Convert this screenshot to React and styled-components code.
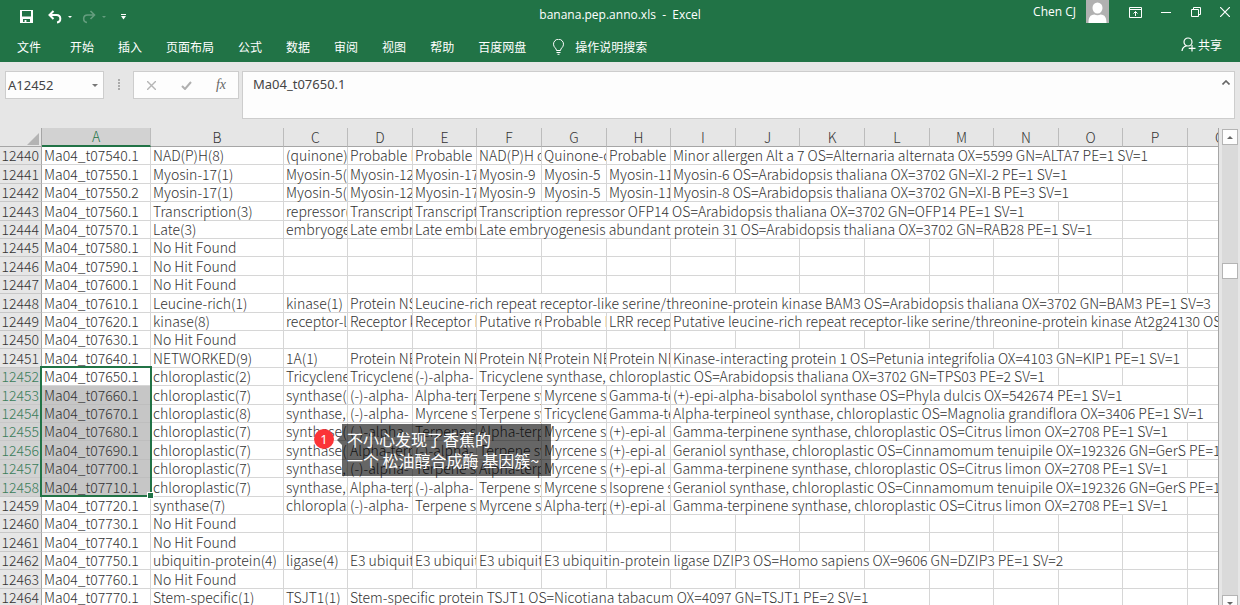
import React, { useState } from 'react';
import styled, { createGlobalStyle, css } from 'styled-components';

const GREEN = '#217346';
const LINE = '#d6d6d6';
const EDGE = '#a6a6a6';

const GlobalStyle = createGlobalStyle`
  * { box-sizing: border-box; }
  body {
    margin: 0;
    overflow: hidden;
    font-family: "Noto Sans CJK SC", sans-serif;
    color: #333;
  }
  button, input, textarea {
    font: inherit;
    color: inherit;
    border: 0;
    padding: 0;
    margin: 0;
    background: none;
  }
`;

const Window = styled.div`
  display: flex;
  flex-direction: column;
  height: 100vh;
  background: #e6e6e6;
`;

const Ribbon = styled.header`
  background: ${GREEN};
  color: #fff;
  height: 62px;
`;

const TitleBar = styled.div`
  display: grid;
  grid-template-columns: 1fr auto 1fr;
  height: 31px;
`;

const QuickAccess = styled.div`
  display: flex;
  align-items: center;
  padding: 2px 0 0 20px;
`;

const IconButton = styled.button`
  display: flex;
  align-items: center;
  justify-content: center;
  width: ${props => props.$w || 16}px;
  height: 20px;
  margin-left: ${props => props.$gap || 0}px;
  opacity: ${props => (props.$dim ? 0.3 : 1)};
`;

const FileTitle = styled.div`
  font: 12px/30px "Open Sans", sans-serif;
  white-space: pre;
`;

const Account = styled.div`
  display: flex;
  justify-content: flex-end;
  align-items: flex-start;
  padding-right: 10px;
`;

const UserName = styled.span`
  font: 12px/24px "Open Sans", sans-serif;
  margin-right: 10px;
`;

const WindowButton = styled(IconButton)`
  height: 24px;
`;

const Tabs = styled.nav`
  display: flex;
  align-items: center;
  gap: 24px;
  height: 31px;
  padding: 0 18px 0 17px;
  font-size: 12px;
  line-height: 16px;
`;

const Tab = styled.button`
  margin-right: ${props => (props.$file ? 5 : 0)}px;
  white-space: nowrap;
`;

const Tell = styled.button`
  display: flex;
  align-items: center;
  gap: 10px;
  margin-left: 2px;
  white-space: nowrap;
`;

const Share = styled.button`
  display: flex;
  align-items: center;
  gap: 2px;
  margin-left: auto;
  padding-bottom: 4px;
`;

const FormulaRow = styled.div`
  display: flex;
  align-items: flex-start;
  height: 66px;
  padding: 9px 5px 0;
  font-family: "Noto Sans", sans-serif;
  color: #444;
`;

const Box = styled.div`
  display: flex;
  align-items: center;
  background: #fdfdfd;
  border: 1px solid #cdcdcd;
`;

const NameBox = styled(Box)`
  width: 99px;
  height: 28px;
`;

const NameInput = styled.input`
  flex: 1;
  min-width: 0;
  padding-left: 2px;
  font-size: 13px;
  outline: none;
`;

const Grip = styled.div`
  display: flex;
  justify-content: center;
  width: 29px;
  padding-top: 8px;
`;

const FxBox = styled(Box)`
  width: 106px;
  height: 28px;
  justify-content: space-between;
  padding: 0 8px;
`;

const FxButton = styled.button`
  width: 18px;
  font: italic 14px/18px "Liberation Serif", serif;
  color: #666;
`;

const FormulaBox = styled(Box)`
  flex: 1;
  align-items: flex-start;
  height: 48px;
  margin-left: 3px;
`;

const FormulaInput = styled.textarea`
  flex: 1;
  height: 44px;
  padding: 2px 10px;
  font-size: 13px;
  line-height: 20px;
  resize: none;
  outline: none;
`;

const SheetArea = styled.main`
  display: flex;
  flex: 1;
  min-height: 0;
`;

const Sheet = styled.div`
  position: relative;
  flex: 1;
  min-width: 0;
  overflow: hidden;
  border-right: 1px solid ${EDGE};
`;

const Grid = styled.table`
  table-layout: fixed;
  width: 1252px;
  border-collapse: separate;
  border-spacing: 0;
  background: #fff;
  font-size: 14px;
  line-height: 17px;
  white-space: nowrap;

  tbody tr { height: 18px; }
  tbody tr:nth-child(5n + 2), tbody tr:nth-child(5n + 4) { height: 19px; }
`;

const ColHead = styled.th`
  height: 19px;
  padding: 0;
  font-weight: 300;
  color: ${props => (props.$on ? GREEN : '#333')};
  background: ${props => (props.$on ? '#d2d2d2' : '#e6e6e6')};
  border-right: 1px solid #bcbcbc;
  border-bottom: ${props => (props.$on ? `2px solid ${GREEN}` : `1px solid ${EDGE}`)};
`;

const Corner = styled(ColHead)`
  border-right-color: ${EDGE};
  svg { display: block; margin: 3px 2px 0 auto; }
`;

const RowHead = styled.th`
  padding: 0 2px 0 0;
  font-weight: 300;
  text-align: right;
  color: ${props => (props.$on ? '#3a7d5a' : '#333')};
  background: ${props => (props.$on ? '#d2d2d2' : '#e6e6e6')};
  border-right: 1px solid ${EDGE};
  border-bottom: 1px solid #c8c8c8;
`;

// clipped sideways only, so descenders stay whole in the tight rows
const Cell = styled.td`
  padding: 0 0 0 2px;
  font-weight: 300;
  overflow-x: clip;
  overflow-y: visible;
  border-right: 1px solid ${LINE};
  border-bottom: 1px solid ${LINE};
  ${props => props.$shaded && css`
    background: #c6c6c6;
    border-color: #bebebe;
  `}
  ${props => props.$anchor && css`
    position: relative;
    overflow: visible;
  `}
`;

const Selection = styled.div`
  position: absolute;
  top: -2px;
  left: -2px;
  width: calc(100% + 4px);
  height: 131px;
  border: 2px solid ${GREEN};
  pointer-events: none;

  &::after {
    content: '';
    position: absolute;
    right: -3px;
    bottom: -3px;
    width: 5px;
    height: 5px;
    background: ${GREEN};
    outline: 1px solid #fff;
  }
`;

const Note = styled.aside`
  position: absolute;
  top: 296px;
  left: 314px;
  display: flex;
  align-items: flex-start;
`;

const NoteBadge = styled.span`
  width: 20px;
  height: 20px;
  margin-top: 5px;
  border-radius: 50%;
  background: #fb3437;
  color: #fff;
  font: 13px/20px "Noto Sans", sans-serif;
  text-align: center;
`;

const NoteArrow = styled.span`
  margin: 11px 0 0 3px;
  border: 5px solid transparent;
  border-left-width: 0;
  border-right-color: rgba(0, 0, 0, 0.6);
`;

const NoteText = styled.p`
  margin: 0;
  padding: 5px 12px 5px 5px;
  background: rgba(0, 0, 0, 0.6);
  color: #fff;
  font-size: 16px;
  line-height: 21px;
  white-space: nowrap;
`;

const ScrollBar = styled.div`
  display: flex;
  flex-direction: column;
  width: 16px;
  margin: 1px 2px 0 3px;
  background: #dadada;
`;

const ScrollButton = styled.button`
  display: flex;
  justify-content: center;
  align-items: ${props => (props.$down ? 'flex-end' : 'center')};
  height: ${props => (props.$down ? 10 : 16)}px;
  background: #fdfdfd;
  border: 1px solid #b4b4b4;
  border-bottom-width: ${props => (props.$down ? 0 : 1)}px;
`;

const ScrollTrack = styled.div`
  flex: 1;
  padding-top: 118px;
`;

const ScrollThumb = styled.div`
  height: 16px;
  background: #fff;
  border: 1px solid #b4b4b4;
`;

const tabs = ['文件', '开始', '插入', '页面布局', '公式', '数据', '审阅', '视图', '帮助', '百度网盘'];

const columns = [
  ['A', 109], ['B', 133], ['C', 64], ['D', 65], ['E', 64], ['F', 65], ['G', 65], ['H', 64], ['I', 65],
  ['J', 64], ['K', 65], ['L', 65], ['M', 64], ['N', 65], ['O', 64], ['P', 65], ['Q', 65],
];

const synth = 'synthase, chloroplastic';
const aPinene = '(-)-alpha-';
const aTerp = 'Alpha-terp';
const terpene = 'Terpene sy';
const myrcene = 'Myrcene s';
const epi = '(+)-epi-al';
const gammaLimon = `Gamma-terpinene ${synth} OS=Citrus limon OX=2708 PE=1 SV=1`;
const geraniol = `Geraniol ${synth} OS=Cinnamomum tenuipile OX=192326 GN=GerS PE=1`;
const noHit = ['No Hit Found'];

// values of columns B, C, D...; the last value spills over `span` columns
const rows = [
  { a: 'Ma04_t07540.1', v: ['NAD(P)H(8)', '(quinone)(', 'Probable N', 'Probable N', 'NAD(P)H d', 'Quinone-o', 'Probable N', 'Minor allergen Alt a 7 OS=Alternaria alternata OX=5599 GN=ALTA7 PE=1 SV=1'], span: 8 },
  { a: 'Ma04_t07550.1', v: ['Myosin-17(1)', 'Myosin-5(', 'Myosin-12', 'Myosin-17', 'Myosin-9', 'Myosin-5', 'Myosin-11', 'Myosin-6 OS=Arabidopsis thaliana OX=3702 GN=XI-2 PE=1 SV=1'], span: 7 },
  { a: 'Ma04_t07550.2', v: ['Myosin-17(1)', 'Myosin-5(', 'Myosin-12', 'Myosin-17', 'Myosin-9', 'Myosin-5', 'Myosin-11', 'Myosin-8 OS=Arabidopsis thaliana OX=3702 GN=XI-B PE=3 SV=1'], span: 7 },
  { a: 'Ma04_t07560.1', v: ['Transcription(3)', 'repressor(', 'Transcripti', 'Transcripti', 'Transcription repressor OFP14 OS=Arabidopsis thaliana OX=3702 GN=OFP14 PE=1 SV=1'], span: 9 },
  { a: 'Ma04_t07570.1', v: ['Late(3)', 'embryoge', 'Late embr', 'Late embr', 'Late embryogenesis abundant protein 31 OS=Arabidopsis thaliana OX=3702 GN=RAB28 PE=1 SV=1'], span: 10 },
  { a: 'Ma04_t07580.1', v: noHit },
  { a: 'Ma04_t07590.1', v: noHit },
  { a: 'Ma04_t07600.1', v: noHit },
  { a: 'Ma04_t07610.1', v: ['Leucine-rich(1)', 'kinase(1)', 'Protein NS', 'Leucine-rich repeat receptor-like serine/threonine-protein kinase BAM3 OS=Arabidopsis thaliana OX=3702 GN=BAM3 PE=1 SV=3'], span: 13 },
  { a: 'Ma04_t07620.1', v: ['kinase(8)', 'receptor-l', 'Receptor k', 'Receptor k', 'Putative re', 'Probable L', 'LRR recep', 'Putative leucine-rich repeat receptor-like serine/threonine-protein kinase At2g24130 OS='], span: 9 },
  { a: 'Ma04_t07630.1', v: noHit },
  { a: 'Ma04_t07640.1', v: ['NETWORKED(9)', '1A(1)', 'Protein NE', 'Protein NE', 'Protein NE', 'Protein NE', 'Protein NE', 'Kinase-interacting protein 1 OS=Petunia integrifolia OX=4103 GN=KIP1 PE=1 SV=1'], span: 8 },
  { a: 'Ma04_t07650.1', v: ['chloroplastic(2)', 'Tricyclene', 'Tricyclene', aPinene, `Tricyclene ${synth} OS=Arabidopsis thaliana OX=3702 GN=TPS03 PE=2 SV=1`], span: 9 },
  { a: 'Ma04_t07660.1', v: ['chloroplastic(7)', 'synthase(6', aPinene, aTerp, terpene, myrcene, 'Gamma-te', '(+)-epi-alpha-bisabolol synthase OS=Phyla dulcis OX=542674 PE=1 SV=1'], span: 8 },
  { a: 'Ma04_t07670.1', v: ['chloroplastic(8)', 'synthase,(', aPinene, myrcene, terpene, 'Tricyclene', 'Gamma-te', `Alpha-terpineol ${synth} OS=Magnolia grandiflora OX=3406 PE=1 SV=1`], span: 9 },
  { a: 'Ma04_t07680.1', v: ['chloroplastic(7)', 'synthase(6', aPinene, terpene, aTerp, myrcene, epi, gammaLimon], span: 8 },
  { a: 'Ma04_t07690.1', v: ['chloroplastic(7)', 'synthase(6', aTerp, aPinene, terpene, myrcene, epi, geraniol], span: 9 },
  { a: 'Ma04_t07700.1', v: ['chloroplastic(7)', 'synthase,(', aPinene, terpene, aTerp, myrcene, epi, gammaLimon], span: 8 },
  { a: 'Ma04_t07710.1', v: ['chloroplastic(7)', 'synthase,(', aTerp, aPinene, terpene, myrcene, 'Isoprene s', geraniol], span: 9 },
  { a: 'Ma04_t07720.1', v: ['synthase(7)', 'chloroplas', aPinene, terpene, myrcene, aTerp, epi, gammaLimon], span: 8 },
  { a: 'Ma04_t07730.1', v: noHit },
  { a: 'Ma04_t07740.1', v: noHit },
  { a: 'Ma04_t07750.1', v: ['ubiquitin-protein(4)', 'ligase(4)', 'E3 ubiquit', 'E3 ubiquit', 'E3 ubiquit', 'E3 ubiquitin-protein ligase DZIP3 OS=Homo sapiens OX=9606 GN=DZIP3 PE=1 SV=2'], span: 9 },
  { a: 'Ma04_t07760.1', v: noHit },
  { a: 'Ma04_t07770.1', v: ['Stem-specific(1)', 'TSJT1(1)', 'Stem-specific protein TSJT1 OS=Nicotiana tabacum OX=4097 GN=TSJT1 PE=2 SV=1'], span: 9 },
];

const FIRST_ROW = 12440;
const SEL_FROM = 12452;
const SEL_TO = 12458;

function Caret({ size = 6, color = 'currentColor', up }) {
  return (
    <svg width={size} height={size / 2} viewBox="0 0 6 3" fill={color}>
      <path d={up ? 'M0 3h6L3 0z' : 'M0 0h6L3 3z'} />
    </svg>
  );
}

function TopBar() {
  return (
    <TitleBar>
      <QuickAccess>
        <IconButton $w={13} aria-label="保存">
          <svg width="13" height="13" viewBox="0 0 13 13">
            <path fill="#fff" fillRule="evenodd" d="M0 0h13v13H0zM2 1v5.500h9V1zM3 9v3h1.600v-2h1.800v2H10V9z" />
          </svg>
        </IconButton>
        <IconButton $w={14} $gap={15} aria-label="撤消">
          <svg width="14" height="14" viewBox="0 0 14 14" fill="none" stroke="#fff" strokeWidth="2">
            <path d="M5.500 1L1.500 5l4 4M2 5h6.500c5 0 5 7 .5 7.500" />
          </svg>
        </IconButton>
        <IconButton $w={4} $gap={6} aria-label="撤消列表"><Caret size={4} /></IconButton>
        <IconButton $w={14} $gap={10} $dim aria-label="恢复">
          <svg width="14" height="14" viewBox="0 0 14 14" fill="none" stroke="#fff" strokeWidth="1.600">
            <path d="M8.500 1l4 4-4 4M12 5H5.500c-5 0-5 7-.5 7.500" />
          </svg>
        </IconButton>
        <IconButton $w={4} $gap={6} $dim aria-label="恢复列表"><Caret size={4} /></IconButton>
        <IconButton $w={5} $gap={15} aria-label="自定义快速访问工具栏">
          <svg width="5" height="6" viewBox="0 0 5 6" fill="#fff">
            <path d="M0 0h5v1H0zM0 2h5L2.500 5.500z" />
          </svg>
        </IconButton>
      </QuickAccess>
      <FileTitle>{'banana.pep.anno.xls  -  Excel'}</FileTitle>
      <Account>
        <UserName>Chen CJ</UserName>
        <svg width="23" height="23" viewBox="0 0 23 23">
          <path fill="#b1b1b1" d="M0 0h23v23H0z" />
          <ellipse cx="11.500" cy="8" rx="5" ry="5.500" fill="#fff" />
          <path fill="#fff" d="M2.500 23c0-5 1.500-8.500 6-8.500 1.500 1 4.500 1 6 0 4.500 0 6 3.500 6 8.500z" />
        </svg>
        <WindowButton $w={14} $gap={19} aria-label="功能区显示选项">
          <svg width="13" height="11" viewBox="0 0 13 11" fill="none" stroke="#fff">
            <path d="M.5.5h12v10H.5zM.5 2.500h12M6.500 9V4.500M4.500 6.500l2-2 2 2" />
          </svg>
        </WindowButton>
        <WindowButton $w={11} $gap={18} aria-label="最小化">
          <svg width="10" height="10" viewBox="0 0 10 10" stroke="#fff"><path d="M0 5.500h10" /></svg>
        </WindowButton>
        <WindowButton $w={11} $gap={19} aria-label="还原">
          <svg width="10" height="10" viewBox="0 0 10 10" fill="none" stroke="#fff">
            <path d="M.5 2.500h7v7h-7zM2.500 2.500v-2h7v7h-2" />
          </svg>
        </WindowButton>
        <WindowButton $w={11} $gap={18} aria-label="关闭">
          <svg width="10" height="10" viewBox="0 0 10 10" stroke="#fff" strokeWidth="1.200"><path d="M0 0l10 10M10 0L0 10" /></svg>
        </WindowButton>
      </Account>
    </TitleBar>
  );
}

function TabBar() {
  return (
    <Tabs>
      {tabs.map((t, i) => <Tab key={t} $file={i === 0}>{t}</Tab>)}
      <Tell>
        <svg width="13" height="16" viewBox="0 0 13 16" fill="none" stroke="#fff">
          <path d="M4.500 11.500C4.500 9 1.500 8.500 1.500 5.200a5 5 0 0 1 10 0c0 3.300-3 3.800-3 6.300zM4.500 13.500h4M5.500 15.300h2" />
        </svg>
        操作说明搜索
      </Tell>
      <Share>
        <svg width="15" height="15" viewBox="0 0 15 15" fill="none" stroke="#fff" strokeWidth="1.200">
          <circle cx="7" cy="5" r="4" />
          <path d="M1 14c.3-3 2-4.600 4.500-5.200M11 8v6.500M7.700 11.300h6.800" />
        </svg>
        共享
      </Share>
    </Tabs>
  );
}

function FormulaBar() {
  const [name, setName] = useState('A12452');
  const [formula, setFormula] = useState('Ma04_t07650.1');
  return (
    <FormulaRow>
      <NameBox>
        <NameInput aria-label="名称框" value={name} onChange={e => setName(e.target.value)} />
        <IconButton aria-label="名称列表"><Caret color="#777" /></IconButton>
      </NameBox>
      <Grip>
        <svg width="2" height="12" viewBox="0 0 2 12" fill="#aaa"><path d="M0 0h2v2H0zM0 3h2v2H0zM0 6h2v2H0zM0 9h2v2H0z" /></svg>
      </Grip>
      <FxBox>
        <IconButton $w={18} aria-label="取消">
          <svg width="9" height="9" viewBox="0 0 9 9" stroke="#b5b5b5" strokeWidth="1.400"><path d="M0 0l9 9M9 0L0 9" /></svg>
        </IconButton>
        <IconButton $w={18} aria-label="输入">
          <svg width="11" height="9" viewBox="0 0 11 9" fill="none" stroke="#b0b0b0" strokeWidth="2"><path d="M1 5l3 3 6-7" /></svg>
        </IconButton>
        <FxButton aria-label="插入函数">fx</FxButton>
      </FxBox>
      <FormulaBox>
        <FormulaInput aria-label="编辑栏" value={formula} onChange={e => setFormula(e.target.value)} />
        <IconButton aria-label="折叠编辑栏">
          <svg width="8" height="5" viewBox="0 0 8 5" fill="none" stroke="#666" strokeWidth="1.600"><path d="M.5 4.500L4 1l3.500 3.500" /></svg>
        </IconButton>
      </FormulaBox>
    </FormulaRow>
  );
}

function Row({ n, row }) {
  const on = n >= SEL_FROM && n <= SEL_TO;
  const span = row.span || 1;
  const last = row.v.length - 1;
  const blanks = columns.length - row.v.length - span;
  return (
    <tr>
      <RowHead $on={on} scope="row">{n}</RowHead>
      <Cell $shaded={on && n !== SEL_FROM} $anchor={n === SEL_FROM}>
        {row.a}
        {n === SEL_FROM && <Selection />}
      </Cell>
      {row.v.map((text, i) => <Cell key={i} colSpan={i === last ? span : 1}>{text}</Cell>)}
      {Array.from({ length: blanks }, (_, i) => <Cell key={'b' + i} />)}
    </tr>
  );
}

function App() {
  return (
    <Window>
      <GlobalStyle />
      <Ribbon>
        <TopBar />
        <TabBar />
      </Ribbon>
      <FormulaBar />
      <SheetArea>
        <Sheet>
          <Grid>
            <colgroup>
              <col width="42" />
              {columns.map(([c, w]) => <col key={c} width={w} />)}
            </colgroup>
            <thead>
              <tr>
                <Corner as="td">
                  <svg width="12" height="12" viewBox="0 0 12 12" fill="#b4b4b4"><path d="M12 0v12H0z" /></svg>
                </Corner>
                {columns.map(([c]) => <ColHead key={c} $on={c === 'A'} scope="col">{c}</ColHead>)}
              </tr>
            </thead>
            <tbody>
              {rows.map((row, i) => <Row key={row.a} n={FIRST_ROW + i} row={row} />)}
            </tbody>
          </Grid>
          <Note>
            <NoteBadge>1</NoteBadge>
            <NoteArrow />
            <NoteText>不小心发现了香蕉的<br />一个 松油醇合成酶 基因簇~</NoteText>
          </Note>
        </Sheet>
        <ScrollBar>
          <ScrollButton aria-label="向上滚动"><Caret color="#666" up /></ScrollButton>
          <ScrollTrack><ScrollThumb /></ScrollTrack>
          <ScrollButton $down aria-label="向下滚动"><Caret color="#666" /></ScrollButton>
        </ScrollBar>
      </SheetArea>
    </Window>
  );
}

export default App;
